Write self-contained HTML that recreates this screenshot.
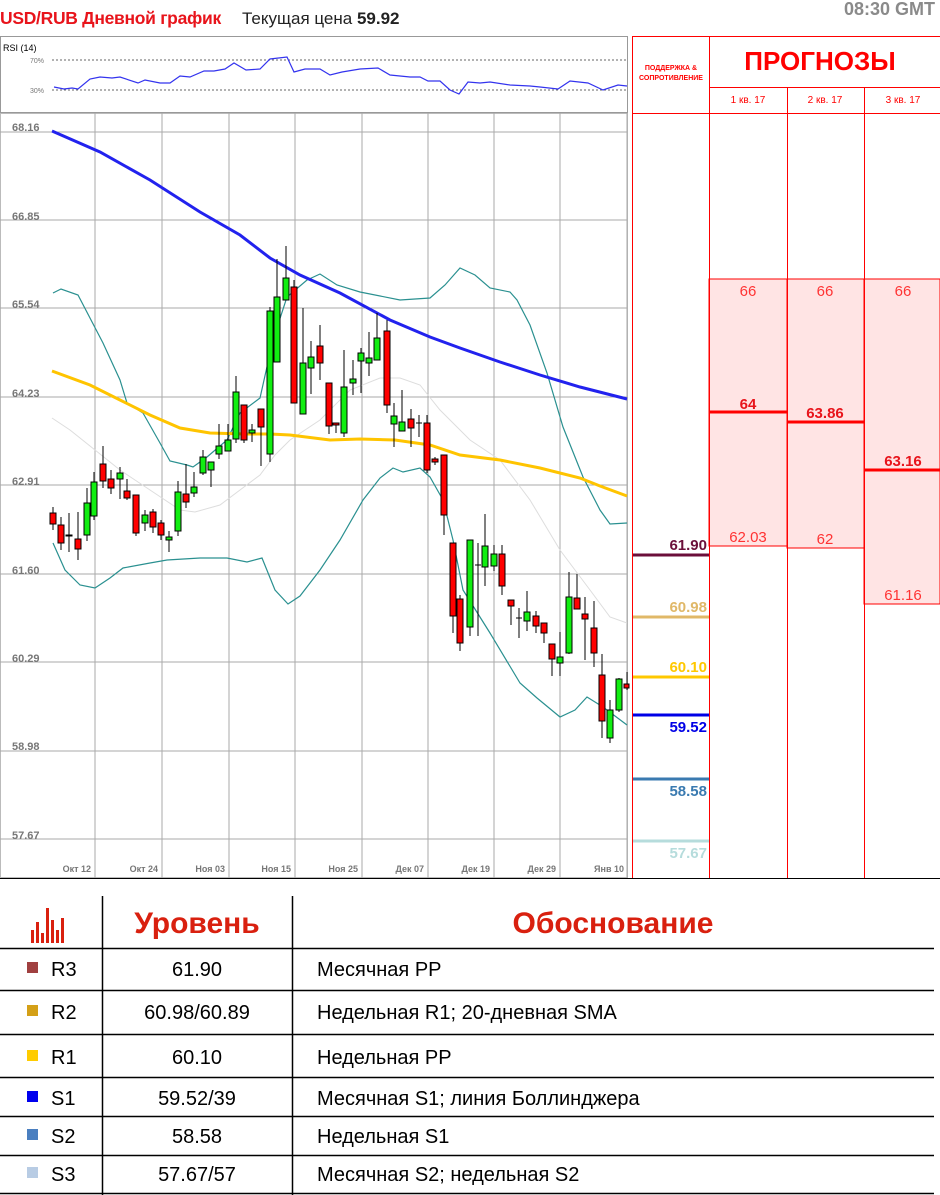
<!DOCTYPE html><html><head><meta charset="utf-8"><style>
body{margin:0;width:940px;height:1195px;background:#fff;position:relative;overflow:hidden;font-family:"Liberation Sans","DejaVu Sans",sans-serif}
.a{position:absolute;white-space:nowrap}
</style></head><body>
<div class="a" style="left:0;top:8px;font-size:17.5px;font-weight:bold;color:#e8141b;letter-spacing:-0.3px">USD/RUB Дневной график</div>
<div class="a" style="left:242px;top:9px;font-size:17px;color:#222">Текущая цена <b>59.92</b></div>
<div class="a" style="right:5px;top:-1px;font-size:18px;font-weight:bold;color:#8a8a8a">08:30 GMT</div>

<svg class="a" style="left:0;top:0" width="940" height="1195" xmlns="http://www.w3.org/2000/svg" font-family="Liberation Sans, sans-serif">
<rect x="0.5" y="36.5" width="627" height="76" fill="none" stroke="#999"/>
<text x="3" y="51" font-size="9" fill="#000">RSI (14)</text>
<text x="30" y="63" font-size="7" fill="#777">70%</text>
<text x="30" y="93" font-size="7" fill="#777">30%</text>
<line x1="52" y1="60" x2="627" y2="60" stroke="#666" stroke-dasharray="2,2"/>
<line x1="52" y1="90" x2="627" y2="90" stroke="#666" stroke-dasharray="2,2"/>
<polyline fill="none" stroke="#3333ee" stroke-width="1.2" points="54,87 64,89 72,88 78,89 90,79 100,77 112,78 120,77 138,83 145,80 160,83 170,83 180,76 190,77 204,71 214,71 225,69 234,63 246,70 260,69 270,59 287,57 294,72 305,69 320,69 330,75 342,72 360,69 378,68 390,75 410,77 420,77 428,81 440,81 450,90 459,94 468,82 480,83 490,82 510,85 530,86 540,87 558,89 570,81 588,83 603,90 618,85 627,86"/>
<rect x="0.5" y="113.5" width="627" height="764" fill="none" stroke="#bbb"/>
<g stroke="#aaa" stroke-width="1">
<line x1="0" y1="132" x2="627" y2="132"/><line x1="0" y1="220" x2="627" y2="220"/><line x1="0" y1="308" x2="627" y2="308"/><line x1="0" y1="397" x2="627" y2="397"/><line x1="0" y1="485" x2="627" y2="485"/><line x1="0" y1="574" x2="627" y2="574"/><line x1="0" y1="662" x2="627" y2="662"/><line x1="0" y1="751" x2="627" y2="751"/><line x1="0" y1="839" x2="627" y2="839"/>
<line x1="95" y1="113" x2="95" y2="878"/><line x1="162" y1="113" x2="162" y2="878"/><line x1="229" y1="113" x2="229" y2="878"/><line x1="295" y1="113" x2="295" y2="878"/><line x1="362" y1="113" x2="362" y2="878"/><line x1="428" y1="113" x2="428" y2="878"/><line x1="494" y1="113" x2="494" y2="878"/><line x1="560" y1="113" x2="560" y2="878"/><line x1="627" y1="113" x2="627" y2="878"/>
</g>
<g font-size="11" font-weight="bold" fill="#777">
<text x="12" y="131">68.16</text><text x="12" y="220">66.85</text><text x="12" y="308">65.54</text><text x="12" y="397">64.23</text><text x="12" y="485">62.91</text><text x="12" y="574">61.60</text><text x="12" y="662">60.29</text><text x="12" y="750">58.98</text><text x="12" y="839">57.67</text>
</g>
<g font-size="9" font-weight="bold" fill="#777" text-anchor="end">
<text x="91" y="872">Окт 12</text><text x="158" y="872">Окт 24</text><text x="225" y="872">Ноя 03</text><text x="291" y="872">Ноя 15</text><text x="358" y="872">Ноя 25</text><text x="424" y="872">Дек 07</text><text x="490" y="872">Дек 19</text><text x="556" y="872">Дек 29</text><text x="624" y="872">Янв 10</text>
</g>
<polyline fill="none" stroke="#dddddd" stroke-width="1" points="52,418 70,430 95,450 120,470 150,490 180,510 195,512 220,505 240,490 260,475 275,455 290,440 320,420 350,390 380,378 400,378 420,385 440,410 470,440 500,460 530,500 560,550 590,590 610,617 627,623"/>
<polyline fill="none" stroke="#2a9090" stroke-width="1.2" points="53,293 61,289 78,295 103,343 120,380 127,403 143,413 160,443 170,461 187,465 193,467 207,457 227,440 240,413 260,398 273,340 287,297 307,280 320,274 337,285 360,292 400,300 430,298 445,285 460,268 475,275 490,288 510,292 517,300 530,325 547,373 563,427 583,477 600,510 610,524 627,523"/>
<polyline fill="none" stroke="#2a9090" stroke-width="1.2" points="53,543 65,570 80,585 95,588 110,578 123,568 150,563 167,560 200,558 227,558 247,562 262,558 275,590 288,604 300,596 320,570 340,540 363,500 380,478 393,468 403,472 420,468 430,477 443,500 453,540 463,590 490,633 520,683 537,698 560,717 575,710 587,697 603,707 627,725"/>
<polyline fill="none" stroke="#ffc400" stroke-width="3" points="52,371 90,385 120,400 150,415 180,428 210,433 245,434 270,434 290,435 330,440 360,439 395,440 430,445 460,455 500,460 540,468 580,478 600,486 627,496"/>
<polyline fill="none" stroke="#2222ee" stroke-width="3" points="52,131 100,152 150,180 200,212 240,235 270,258 300,275 340,293 390,320 430,337 460,348 500,362 540,375 580,387 627,399"/>
<g stroke="#000" stroke-width="1">
<line x1="53" y1="507" x2="53" y2="530"/><rect x="50" y="513" width="6" height="11" fill="#f00"/>
<line x1="61" y1="517" x2="61" y2="550"/><rect x="58" y="525" width="6" height="18" fill="#f00"/>
<line x1="69" y1="513" x2="69" y2="552"/><rect x="66" y="535" width="6" height="1" fill="#1e1"/>
<line x1="78" y1="512" x2="78" y2="560"/><rect x="75" y="539" width="6" height="10" fill="#f00"/>
<line x1="87" y1="488" x2="87" y2="541"/><rect x="84" y="503" width="6" height="32" fill="#1e1"/>
<line x1="94" y1="472" x2="94" y2="520"/><rect x="91" y="482" width="6" height="34" fill="#1e1"/>
<line x1="103" y1="446" x2="103" y2="488"/><rect x="100" y="464" width="6" height="17" fill="#f00"/>
<line x1="111" y1="470" x2="111" y2="494"/><rect x="108" y="479" width="6" height="9" fill="#f00"/>
<line x1="120" y1="467" x2="120" y2="499"/><rect x="117" y="473" width="6" height="6" fill="#1e1"/>
<line x1="127" y1="479" x2="127" y2="500"/><rect x="124" y="491" width="6" height="7" fill="#f00"/>
<line x1="136" y1="495" x2="136" y2="536"/><rect x="133" y="495" width="6" height="38" fill="#f00"/>
<line x1="145" y1="510" x2="145" y2="531"/><rect x="142" y="515" width="6" height="8" fill="#1e1"/>
<line x1="153" y1="509" x2="153" y2="533"/><rect x="150" y="512" width="6" height="15" fill="#f00"/>
<line x1="161" y1="520" x2="161" y2="540"/><rect x="158" y="523" width="6" height="12" fill="#f00"/>
<line x1="169" y1="531" x2="169" y2="552"/><rect x="166" y="537" width="6" height="3" fill="#1e1"/>
<line x1="178" y1="481" x2="178" y2="536"/><rect x="175" y="492" width="6" height="39" fill="#1e1"/>
<line x1="186" y1="464" x2="186" y2="508"/><rect x="183" y="494" width="6" height="8" fill="#f00"/>
<line x1="194" y1="472" x2="194" y2="497"/><rect x="191" y="487" width="6" height="6" fill="#1e1"/>
<line x1="203" y1="450" x2="203" y2="475"/><rect x="200" y="457" width="6" height="16" fill="#1e1"/>
<line x1="211" y1="462" x2="211" y2="487"/><rect x="208" y="462" width="6" height="8" fill="#1e1"/>
<line x1="219" y1="424" x2="219" y2="459"/><rect x="216" y="446" width="6" height="8" fill="#1e1"/>
<line x1="228" y1="424" x2="228" y2="451"/><rect x="225" y="440" width="6" height="11" fill="#1e1"/>
<line x1="236" y1="376" x2="236" y2="443"/><rect x="233" y="392" width="6" height="47" fill="#1e1"/>
<line x1="244" y1="405" x2="244" y2="443"/><rect x="241" y="405" width="6" height="35" fill="#f00"/>
<line x1="252" y1="424" x2="252" y2="442"/><rect x="249" y="430" width="6" height="3" fill="#1e1"/>
<line x1="261" y1="409" x2="261" y2="466"/><rect x="258" y="409" width="6" height="18" fill="#f00"/>
<line x1="270" y1="307" x2="270" y2="462"/><rect x="267" y="311" width="6" height="143" fill="#1e1"/>
<line x1="277" y1="259" x2="277" y2="362"/><rect x="274" y="297" width="6" height="65" fill="#1e1"/>
<line x1="286" y1="246" x2="286" y2="300"/><rect x="283" y="278" width="6" height="22" fill="#1e1"/>
<line x1="294" y1="280" x2="294" y2="403"/><rect x="291" y="287" width="6" height="116" fill="#f00"/>
<line x1="303" y1="308" x2="303" y2="414"/><rect x="300" y="363" width="6" height="51" fill="#1e1"/>
<line x1="311" y1="341" x2="311" y2="394"/><rect x="308" y="357" width="6" height="11" fill="#1e1"/>
<line x1="320" y1="325" x2="320" y2="380"/><rect x="317" y="346" width="6" height="17" fill="#f00"/>
<line x1="329" y1="383" x2="329" y2="434"/><rect x="326" y="383" width="6" height="43" fill="#f00"/>
<line x1="336" y1="423" x2="336" y2="433"/><rect x="333" y="423" width="6" height="2" fill="#f00"/>
<line x1="344" y1="350" x2="344" y2="437"/><rect x="341" y="387" width="6" height="46" fill="#1e1"/>
<line x1="353" y1="360" x2="353" y2="395"/><rect x="350" y="379" width="6" height="4" fill="#1e1"/>
<line x1="361" y1="348" x2="361" y2="393"/><rect x="358" y="353" width="6" height="8" fill="#1e1"/>
<line x1="369" y1="332" x2="369" y2="376"/><rect x="366" y="358" width="6" height="5" fill="#1e1"/>
<line x1="377" y1="313" x2="377" y2="360"/><rect x="374" y="338" width="6" height="22" fill="#1e1"/>
<line x1="387" y1="320" x2="387" y2="413"/><rect x="384" y="331" width="6" height="74" fill="#f00"/>
<line x1="394" y1="403" x2="394" y2="447"/><rect x="391" y="416" width="6" height="8" fill="#1e1"/>
<line x1="402" y1="390" x2="402" y2="431"/><rect x="399" y="422" width="6" height="9" fill="#1e1"/>
<line x1="411" y1="409" x2="411" y2="447"/><rect x="408" y="419" width="6" height="9" fill="#f00"/>
<line x1="419" y1="415" x2="419" y2="437"/><line x1="416" y1="423" x2="422" y2="423"/>
<line x1="427" y1="415" x2="427" y2="473"/><rect x="424" y="423" width="6" height="47" fill="#f00"/>
<line x1="435" y1="457" x2="435" y2="465"/><rect x="432" y="459" width="6" height="3" fill="#f00"/>
<line x1="444" y1="455" x2="444" y2="535"/><rect x="441" y="455" width="6" height="60" fill="#f00"/>
<line x1="453" y1="543" x2="453" y2="633"/><rect x="450" y="543" width="6" height="73" fill="#f00"/>
<line x1="460" y1="595" x2="460" y2="651"/><rect x="457" y="599" width="6" height="44" fill="#f00"/>
<line x1="470" y1="540" x2="470" y2="636"/><rect x="467" y="540" width="6" height="87" fill="#1e1"/>
<line x1="478" y1="543" x2="478" y2="636"/><line x1="475" y1="565" x2="481" y2="565"/>
<line x1="485" y1="514" x2="485" y2="586"/><rect x="482" y="546" width="6" height="21" fill="#1e1"/>
<line x1="494" y1="545" x2="494" y2="571"/><rect x="491" y="554" width="6" height="12" fill="#1e1"/>
<line x1="502" y1="545" x2="502" y2="595"/><rect x="499" y="554" width="6" height="32" fill="#f00"/>
<line x1="511" y1="600" x2="511" y2="625"/><rect x="508" y="600" width="6" height="6" fill="#f00"/>
<line x1="519" y1="608" x2="519" y2="638"/><line x1="516" y1="618" x2="522" y2="618"/>
<line x1="527" y1="591" x2="527" y2="631"/><rect x="524" y="612" width="6" height="9" fill="#1e1"/>
<line x1="536" y1="611" x2="536" y2="633"/><rect x="533" y="616" width="6" height="10" fill="#f00"/>
<line x1="544" y1="623" x2="544" y2="643"/><rect x="541" y="623" width="6" height="10" fill="#f00"/>
<line x1="552" y1="644" x2="552" y2="676"/><rect x="549" y="644" width="6" height="15" fill="#f00"/>
<line x1="560" y1="632" x2="560" y2="676"/><rect x="557" y="657" width="6" height="6" fill="#1e1"/>
<line x1="569" y1="572" x2="569" y2="654"/><rect x="566" y="597" width="6" height="56" fill="#1e1"/>
<line x1="577" y1="574" x2="577" y2="609"/><rect x="574" y="598" width="6" height="11" fill="#f00"/>
<line x1="585" y1="597" x2="585" y2="660"/><rect x="582" y="614" width="6" height="5" fill="#f00"/>
<line x1="594" y1="601" x2="594" y2="667"/><rect x="591" y="628" width="6" height="25" fill="#f00"/>
<line x1="602" y1="654" x2="602" y2="738"/><rect x="599" y="675" width="6" height="46" fill="#f00"/>
<line x1="610" y1="700" x2="610" y2="743"/><rect x="607" y="710" width="6" height="28" fill="#1e1"/>
<line x1="619" y1="678" x2="619" y2="712"/><rect x="616" y="679" width="6" height="31" fill="#1e1"/>
<line x1="627" y1="672" x2="627" y2="690"/><rect x="624" y="684" width="5" height="4" fill="#f00"/>
</g>
<rect x="709" y="279" width="78" height="267" fill="#ffe4e4" stroke="#f00"/>
<rect x="787" y="279" width="77" height="269" fill="#ffe4e4" stroke="#f00"/>
<rect x="864" y="279" width="76" height="325" fill="#ffe4e4" stroke="#f00"/>
<g stroke="#f00" stroke-width="1">
<line x1="632.5" y1="36" x2="632.5" y2="878"/><line x1="709.5" y1="36" x2="709.5" y2="878"/>
<line x1="787.5" y1="87" x2="787.5" y2="878"/><line x1="864.5" y1="87" x2="864.5" y2="878"/>
<line x1="632" y1="36.5" x2="940" y2="36.5"/><line x1="709" y1="87.5" x2="940" y2="87.5"/><line x1="632" y1="113.5" x2="940" y2="113.5"/>
</g>
<line x1="709" y1="412" x2="787" y2="412" stroke="#f00" stroke-width="3"/>
<line x1="787" y1="422" x2="864" y2="422" stroke="#f00" stroke-width="3"/>
<line x1="864" y1="470" x2="940" y2="470" stroke="#f00" stroke-width="3"/>
<g font-size="15" fill="#f33" text-anchor="middle">
<text x="748" y="296">66</text><text x="825" y="296">66</text><text x="903" y="296">66</text>
<text x="748" y="542">62.03</text><text x="825" y="544">62</text><text x="903" y="600">61.16</text>
</g>
<g font-size="15" font-weight="bold" fill="#e8141b" text-anchor="middle">
<text x="748" y="409">64</text><text x="825" y="418">63.86</text><text x="903" y="466">63.16</text>
</g>
<text x="820" y="70" font-size="26" font-weight="bold" fill="#f00" text-anchor="middle">ПРОГНОЗЫ</text>
<g font-size="7" font-weight="bold" fill="#f00" text-anchor="middle"><text x="671" y="70">ПОДДЕРЖКА &amp;</text><text x="671" y="80">СОПРОТИВЛЕНИЕ</text></g>
<g font-size="10" fill="#f00" text-anchor="middle"><text x="748" y="103">1 кв. 17</text><text x="825" y="103">2 кв. 17</text><text x="903" y="103">3 кв. 17</text></g>
<line x1="633" y1="555" x2="709" y2="555" stroke="#6b0f3a" stroke-width="3"/>
<line x1="633" y1="617" x2="709" y2="617" stroke="#e0b868" stroke-width="3"/>
<line x1="633" y1="677" x2="709" y2="677" stroke="#ffc800" stroke-width="3"/>
<line x1="633" y1="715" x2="709" y2="715" stroke="#0000e6" stroke-width="3"/>
<line x1="633" y1="779" x2="709" y2="779" stroke="#3a7ab0" stroke-width="3"/>
<line x1="633" y1="841" x2="709" y2="841" stroke="#b6dcdc" stroke-width="3"/>
<g font-size="15" font-weight="bold" text-anchor="end">
<text x="707" y="550" fill="#6b0f3a">61.90</text><text x="707" y="612" fill="#e0b868">60.98</text><text x="707" y="672" fill="#ffc800">60.10</text><text x="707" y="732" fill="#0000e6">59.52</text><text x="707" y="796" fill="#3a7ab0">58.58</text><text x="707" y="858" fill="#b6dcdc">57.67</text>
</g>
<line x1="0" y1="878.5" x2="940" y2="878.5" stroke="#000"/>
<g stroke="#000" stroke-width="1.5">
<line x1="102.5" y1="896" x2="102.5" y2="1195"/><line x1="292.5" y1="896" x2="292.5" y2="1195"/>
<line x1="0" y1="948.5" x2="934" y2="948.5"/><line x1="0" y1="990.5" x2="934" y2="990.5"/><line x1="0" y1="1034.5" x2="934" y2="1034.5"/><line x1="0" y1="1077.5" x2="934" y2="1077.5"/><line x1="0" y1="1116.5" x2="934" y2="1116.5"/><line x1="0" y1="1155.5" x2="934" y2="1155.5"/><line x1="0" y1="1193.5" x2="934" y2="1193.5"/>
</g>
<g fill="#d9200f">
<rect x="31" y="930" width="3" height="13"/><rect x="36" y="922" width="3" height="21"/><rect x="41" y="933" width="3" height="10"/><rect x="46" y="908" width="3" height="35"/><rect x="51" y="920" width="3" height="23"/><rect x="56" y="930" width="3" height="13"/><rect x="61" y="918" width="3" height="25"/>
</g>
<g font-size="30" font-weight="bold" fill="#d9200f" text-anchor="middle"><text x="197" y="933">Уровень</text><text x="613" y="933">Обоснование</text></g>
<rect x="27" y="962" width="11" height="11" fill="#a04040"/>
<rect x="27" y="1005" width="11" height="11" fill="#d4a017"/>
<rect x="27" y="1050" width="11" height="11" fill="#ffcc00"/>
<rect x="27" y="1091" width="11" height="11" fill="#0000ee"/>
<rect x="27" y="1129" width="11" height="11" fill="#4a7fc0"/>
<rect x="27" y="1167" width="11" height="11" fill="#b8cce4"/>
<g font-size="20" fill="#000">
<text x="51" y="976">R3</text><text x="51" y="1019">R2</text><text x="51" y="1064">R1</text><text x="51" y="1105">S1</text><text x="51" y="1143">S2</text><text x="51" y="1181">S3</text>
<g text-anchor="middle"><text x="197" y="976">61.90</text><text x="197" y="1019">60.98/60.89</text><text x="197" y="1064">60.10</text><text x="197" y="1105">59.52/39</text><text x="197" y="1143">58.58</text><text x="197" y="1181">57.67/57</text></g>
<text x="317" y="976">Месячная PP</text><text x="317" y="1019">Недельная R1; 20-дневная SMA</text><text x="317" y="1064">Недельная PP</text><text x="317" y="1105">Месячная S1; линия Боллинджера</text><text x="317" y="1143">Недельная S1</text><text x="317" y="1181">Месячная S2; недельная S2</text>
</g>
</svg>
</body></html>
